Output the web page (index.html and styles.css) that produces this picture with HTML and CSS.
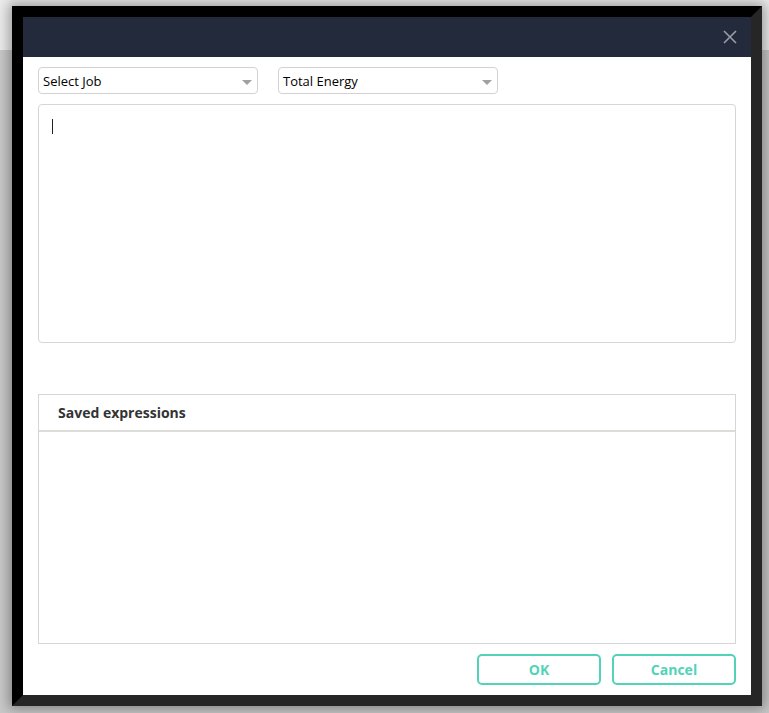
FILE: index.html
```html
<!DOCTYPE html>
<html>
<head>
<meta charset="utf-8">
<link rel="stylesheet" href="styles.css">
</head>
<body>
<div class="topbar"></div>
<div class="dialog">
  <div class="dlg-header">
    <svg class="close" width="14" height="14" viewBox="0 0 14 14"><path d="M1 1 L13 13 M13 1 L1 13" stroke="#9a9ea8" stroke-width="1.6" fill="none"/></svg>
  </div>
  <div class="dlg-body">
    <div class="selects">
      <div class="select"><span>Select Job</span><i class="arrow"></i></div>
      <div class="select"><span>Total Energy</span><i class="arrow"></i></div>
    </div>
    <div class="editor"><span class="caret"></span></div>
    <div class="panel">
      <div class="panel-head">Saved expressions</div>
      <div class="panel-body"></div>
    </div>
    <div class="actions">
      <button class="btn">OK</button>
      <button class="btn">Cancel</button>
    </div>
  </div>
</div>
</body>
</html>
```

FILE: styles.css
```css
html, body {
  margin: 0;
  padding: 0;
  height: 100%;
}
body {
  background: #c9c9c9;
  font-family: "Open Sans", "Noto Sans", sans-serif;
  overflow: hidden;
  position: relative;
}
.topbar {
  height: 50px;
  background: #ececec;
}
.dialog {
  position: absolute;
  left: 12px;
  top: 6px;
  width: 728px;
  height: 678px;
  border: 11px solid #000;
  border-right-color: #262626;
  border-bottom-color: #262626;
  background: #fff;
  box-shadow: 0 0 12px 3px rgba(0,0,0,0.35);
  display: flex;
  flex-direction: column;
}
.dlg-header {
  height: 40px;
  background: #232a3b;
  display: flex;
  align-items: center;
  justify-content: flex-end;
  padding-right: 14px;
  flex-shrink: 0;
}
.close {
  display: block;
}
.dlg-body {
  padding: 10px 15px 10px 15px;
  display: flex;
  flex-direction: column;
  flex: 1;
}
.selects {
  display: flex;
  gap: 20px;
  height: 27px;
}
.select {
  width: 220px;
  box-sizing: border-box;
  height: 27px;
  border: 1px solid #d2d2d2;
  border-radius: 4px;
  display: flex;
  align-items: center;
  justify-content: space-between;
  padding: 0 5px 0 4px;
  font-size: 13px;
  color: #000;
}
.arrow {
  width: 0;
  height: 0;
  border-left: 5px solid transparent;
  border-right: 5px solid transparent;
  border-top: 5px solid #a0a0a0;
  margin-top: 4px;
}
.editor {
  margin-top: 10px;
  height: 239px;
  box-sizing: border-box;
  border: 1px solid #d6d6d6;
  border-radius: 4px;
  padding: 14px 13px;
}
.caret {
  display: block;
  width: 1px;
  height: 15px;
  background: #222;
}
.panel {
  margin-top: 51px;
  height: 250px;
  box-sizing: border-box;
  border: 1px solid #d6d6d6;
  display: flex;
  flex-direction: column;
}
.panel-head {
  height: 35px;
  border-bottom: 2px solid #dcdcd8;
  display: flex;
  align-items: center;
  padding-left: 19px;
  font-size: 14px;
  font-weight: 700;
  color: #333;
}
.panel-body {
  flex: 1;
}
.actions {
  margin-top: 10px;
  display: flex;
  justify-content: flex-end;
  gap: 11px;
}
.btn {
  width: 124px;
  height: 31px;
  box-sizing: border-box;
  border: 2px solid #52d3b7;
  border-radius: 5px;
  background: #fff;
  color: #52d3b7;
  font-family: "Open Sans", "Noto Sans", sans-serif;
  font-size: 14px;
  font-weight: 700;
  padding: 0;
}
```
